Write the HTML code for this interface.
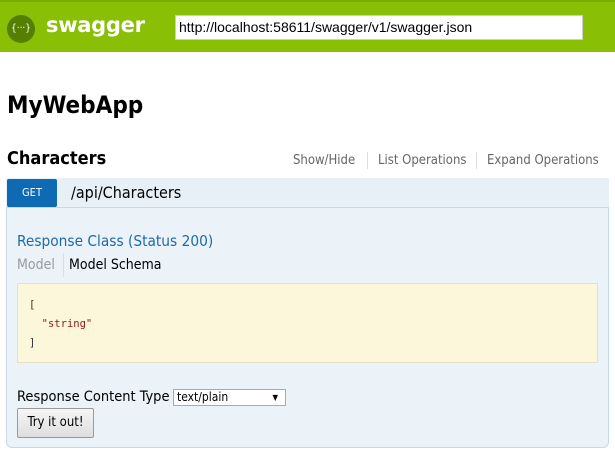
<!DOCTYPE html>
<html><head><style>
*{margin:0;padding:0;box-sizing:border-box}
body{width:615px;height:460px;background:#fff;font-family:"DejaVu Sans Condensed","Liberation Sans Narrow","Liberation Sans",sans-serif;position:relative;overflow:hidden}
.abs{position:absolute}
#hdr{left:0;top:0;width:615px;height:52px;background:#89bf04;border-top:2px solid #7aab00}
</style></head><body>
<div id="hdr" class="abs"></div>
<div class="abs" style="left:7px;top:15px;width:28px;height:28px;border-radius:50%;background:#547f00;color:#fff;font-size:10px;text-align:center;line-height:27px">{···}</div>
<div class="abs" style="left:46px;top:13px;color:#fff;font-weight:bold;font-size:21px;font-family:'DejaVu Sans','Liberation Sans',sans-serif;letter-spacing:-0.3px">swagger</div>
<div class="abs" style="left:175px;top:15px;width:408px;height:25px;background:#fff;border:1px solid #ccc;font-family:'Liberation Sans',sans-serif;font-size:14px;line-height:23px;padding-left:3px;color:#000">http://localhost:58611/swagger/v1/swagger.json</div>
<div class="abs" style="left:7px;top:91px;font-weight:bold;font-size:24px;color:#000">MyWebApp</div>
<div class="abs" style="left:7px;top:148px;font-weight:bold;font-size:18px;color:#000">Characters</div>
<div class="abs" style="left:293px;top:153px;font-size:13px;color:#666">Show/Hide</div>
<div class="abs" style="left:367px;top:152px;width:1px;height:17px;background:#ddd"></div>
<div class="abs" style="left:378px;top:153px;font-size:13px;color:#666">List Operations</div>
<div class="abs" style="left:476px;top:152px;width:1px;height:17px;background:#ddd"></div>
<div class="abs" style="left:487px;top:153px;font-size:13px;color:#666">Expand Operations</div>
<div class="abs" style="left:6px;top:178px;width:603px;height:270px;background:#ebf3f9;border:1px solid #c3d9ec;border-radius:0 0 6px 6px"></div>
<div class="abs" style="left:6px;top:178px;width:603px;height:30px;background:#e7f0f7;border-bottom:1px solid #c3d9ec"></div>
<div class="abs" style="left:7px;top:179px;width:50px;height:28px;background:#0f6ab4;border-radius:2px;color:#fff;font-size:11px;text-align:center;line-height:28px">GET</div>
<div class="abs" style="left:71px;top:183px;font-size:16px;color:#000">/api/Characters</div>
<div class="abs" style="left:17px;top:232px;font-size:15.3px;color:#1f6aa8">Response Class (Status 200)</div>
<div class="abs" style="left:17px;top:257px;font-size:14px;color:#999">Model</div>
<div class="abs" style="left:63px;top:253px;width:1px;height:24px;background:#ddd"></div>
<div class="abs" style="left:69px;top:257px;font-size:14px;color:#000">Model Schema</div>
<div class="abs" style="left:17px;top:283px;width:581px;height:80px;background:#fcf6db;border:1px solid #e5e0c6"></div>
<div class="abs" style="left:29px;top:296px;font-family:'DejaVu Sans Mono','Liberation Mono',monospace;font-size:10.5px;line-height:19px;color:#333;white-space:pre">[
  <span style="color:#8b1a1a">"string"</span>
]</div>
<div class="abs" style="left:17px;top:389px;font-size:14.5px;color:#000">Response Content Type</div>
<div class="abs" style="left:173px;top:389px;width:113px;height:17px;border:1px solid #aaa;background:#fff;font-size:12px;line-height:15px;padding-left:3px;color:#000">text/plain<span style="position:absolute;right:7px;font-size:8px">▼</span></div>
<div class="abs" style="left:17px;top:408px;width:77px;height:30px;border:1px solid #999;border-radius:2px;background:linear-gradient(#f6f6f6,#dedede);font-size:13px;text-align:center;line-height:28px;color:#000">Try it out!</div>
</body></html>
